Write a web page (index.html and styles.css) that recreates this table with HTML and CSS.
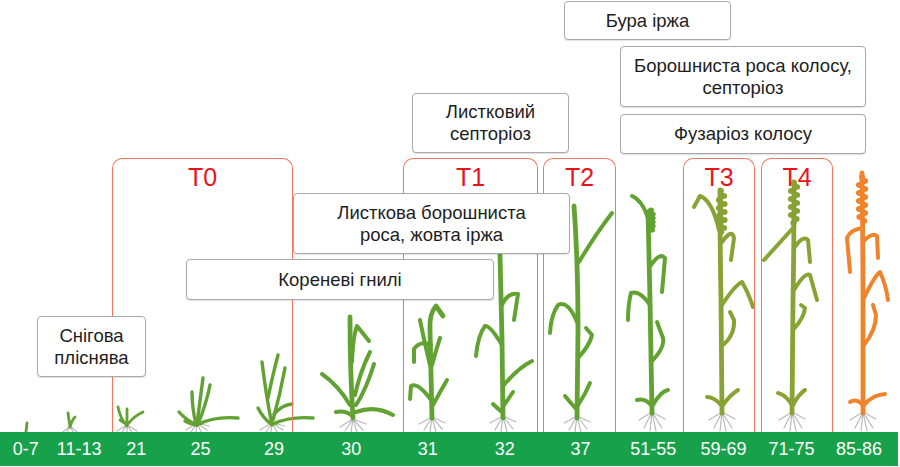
FILE: index.html
```html
<!DOCTYPE html>
<html lang="uk">
<head>
<meta charset="utf-8">
<title>Фази розвитку пшениці</title>
<link rel="stylesheet" href="styles.css">
</head>
<body>
<div class="chart">
  <div class="stage">
    <svg class="plants" width="900" height="432" viewBox="0 0 900 432" xmlns="http://www.w3.org/2000/svg">
      <g class="roots">
        <path d="M70 426 L63 432 M70 426 L67 432 M70 426 L73 432 M70 426 L77 432"/>
        <path d="M127 425 L117 431 M127 425 L122 432 M127 425 L127 432 M127 425 L132 432 M127 425 L137 431"/>
        <path d="M197 423 L186 430 M197 423 L191 432 M197 423 L196 432 M197 423 L201 432 M197 423 L207 430 M197 423 L209 426"/>
        <path d="M272 423 L260 430 M272 423 L266 432 M272 423 L271 432 M272 423 L277 432 M272 423 L283 430 M272 423 L285 426"/>
        <path d="M353 419 L340 427 M353 419 L345 431 M353 419 L351 432 M353 419 L357 432 M353 419 L363 430 M353 419 L366 424"/>
        <path d="M432 417 L419 424 M432 417 L424 430 M432 417 L430 432 M432 417 L436 432 M432 417 L442 429 M432 417 L445 423"/>
        <path d="M503 416 L490 423 M503 416 L495 430 M503 416 L501 432 M503 416 L507 432 M503 416 L513 429 M503 416 L516 422"/>
        <path d="M577 416 L564 423 M577 416 L569 430 M577 416 L575 432 M577 416 L581 432 M577 416 L587 429 M577 416 L590 422"/>
        <path d="M652 412 L639 420 M652 412 L644 428 M652 412 L650 431 M652 412 L656 431 M652 412 L662 428 M652 412 L665 419"/>
        <path d="M722 412 L709 420 M722 412 L714 428 M722 412 L720 431 M722 412 L726 431 M722 412 L732 428 M722 412 L735 419"/>
        <path d="M792 412 L779 420 M792 412 L784 428 M792 412 L790 431 M792 412 L796 431 M792 412 L802 428 M792 412 L805 419"/>
        <path d="M863 412 L850 420 M863 412 L855 428 M863 412 L861 431 M863 412 L867 431 M863 412 L873 428 M863 412 L876 419"/>
      </g>

      <g class="plant green thin">
        <path d="M26 432 L27 423"/>
        <path d="M70 427 L68 413 M70 427 Q72 420 75 417"/>
        <path d="M127 426 Q120 418 118 407 M127 426 L127 409 M128 424 Q134 416 143 412 M126 424 L120 420"/>
      </g>

      <g class="plant green mid">
        <path d="M197 425 Q186 420 179 412"/>
        <path d="M197 425 Q200 400 203 378"/>
        <path d="M198 424 Q206 405 210 385"/>
        <path d="M196 424 Q192 408 192 392"/>
        <path d="M199 424 Q215 416 238 418"/>
        <path d="M196 425 Q190 424 185 421"/>
      </g>

      <g class="plant green mid">
        <path d="M272 425 Q266 395 262 362"/>
        <path d="M268 398 Q272 378 278 355"/>
        <path d="M273 420 Q280 395 285 368"/>
        <path d="M271 424 Q263 418 258 408"/>
        <path d="M273 424 Q290 416 313 418"/>
        <path d="M274 414 Q282 405 292 404"/>
      </g>

      <g class="plant green">
        <path class="stem" d="M353 418 Q350 370 350 317"/>
        <path d="M352 362 Q353 336 357 326 L369 341"/>
        <path d="M355 395 Q360 372 370 352"/>
        <path d="M350 405 Q338 385 322 374"/>
        <path d="M356 412 Q375 405 393 415"/>
        <path d="M351 415 Q345 410 336 412"/>
        <path d="M356 405 Q366 390 374 364"/>
      </g>

      <g class="plant green">
        <path class="stem" d="M432 418 L430 330 Q429 314 436 306 L443 316"/>
        <path d="M430 365 Q424 340 420 320"/>
        <path d="M431 345 Q420 340 414 349 L414 362"/>
        <path d="M432 365 Q436 350 440 338"/>
        <path d="M431 400 Q418 382 411 386 L410 399"/>
        <path d="M433 405 Q440 392 447 380"/>
      </g>

      <g class="plant green">
        <path class="stem" d="M503 418 L502 340 Q501 290 500 255"/>
        <path d="M502 305 Q508 292 518 294 L514 320"/>
        <path d="M502 345 Q490 325 485 326 Q478 335 476 356"/>
        <path d="M504 385 Q518 368 532 361"/>
        <path d="M504 405 Q509 398 513 392"/>
        <path d="M502 412 Q497 408 493 404"/>
      </g>

      <g class="plant green">
        <path class="stem" d="M577 418 L578 330 Q578 260 574 206"/>
        <path d="M579 262 Q595 235 612 213"/>
        <path d="M577 322 Q568 300 558 305 Q551 315 550 333"/>
        <path d="M578 358 Q590 345 592 335 L586 328"/>
        <path d="M578 405 Q585 395 590 383"/>
        <path d="M577 410 Q570 402 565 396"/>
      </g>

      <g class="plant green">
        <path class="stem" d="M652 413 L650 300 Q649 250 648 212"/>
        <g class="ear">
          <ellipse cx="651" cy="210" rx="3" ry="2.6"/>
          <ellipse cx="652.5" cy="214" rx="3.2" ry="2.6"/>
          <ellipse cx="652.5" cy="218" rx="3.2" ry="2.6"/>
          <ellipse cx="652.5" cy="222" rx="3.2" ry="2.6"/>
          <ellipse cx="652.5" cy="226" rx="3.2" ry="2.6"/>
          <ellipse cx="652" cy="230" rx="3" ry="2.6"/>
        </g>
        <path d="M648 218 Q642 200 632 196"/>
        <path d="M651 265 Q660 252 665 258 L662 292"/>
        <path d="M650 305 Q640 290 631 293 Q628 305 628 320"/>
        <path d="M651 362 Q665 348 663 338 L657 322"/>
        <path d="M651 405 Q645 398 637 400"/>
        <path d="M653 405 Q660 392 668 390"/>
      </g>

      <g class="plant olive">
        <path class="stem" d="M722 413 L721 300 Q720 250 720 190"/>
        <g class="ear">
          <ellipse cx="721" cy="191" rx="3" ry="3"/>
          <ellipse cx="723.5" cy="196" rx="3.6" ry="3"/>
          <ellipse cx="719.5" cy="200" rx="3.6" ry="3"/>
          <ellipse cx="724" cy="204" rx="3.6" ry="3"/>
          <ellipse cx="719.5" cy="208" rx="3.6" ry="3"/>
          <ellipse cx="724" cy="212" rx="3.6" ry="3"/>
          <ellipse cx="719.5" cy="216" rx="3.6" ry="3"/>
          <ellipse cx="724" cy="220" rx="3.6" ry="3"/>
          <ellipse cx="720" cy="224" rx="3.6" ry="3"/>
          <ellipse cx="723.5" cy="228" rx="3.6" ry="3"/>
          <ellipse cx="721" cy="232" rx="3.2" ry="3"/>
        </g>
        <path d="M719 230 Q712 200 700 196 L694 207"/>
        <path d="M722 242 Q732 228 734 238 L731 260"/>
        <path d="M722 305 Q735 285 742 282 Q748 292 753 307"/>
        <path d="M723 345 Q735 335 734 320 L730 312"/>
        <path d="M721 405 Q714 397 707 397"/>
        <path d="M723 405 Q730 395 738 390"/>
      </g>

      <g class="plant olive">
        <path class="stem" d="M792 413 L793 300 Q794 250 794 182"/>
        <g class="ear">
          <ellipse cx="794" cy="183" rx="3" ry="3"/>
          <ellipse cx="796.5" cy="187" rx="3.6" ry="3"/>
          <ellipse cx="791.5" cy="191" rx="3.6" ry="3"/>
          <ellipse cx="796.5" cy="195" rx="3.6" ry="3"/>
          <ellipse cx="791.5" cy="199" rx="3.6" ry="3"/>
          <ellipse cx="796.5" cy="203" rx="3.6" ry="3"/>
          <ellipse cx="791.5" cy="207" rx="3.6" ry="3"/>
          <ellipse cx="796.5" cy="211" rx="3.6" ry="3"/>
          <ellipse cx="791.5" cy="215" rx="3.6" ry="3"/>
          <ellipse cx="796" cy="219" rx="3.6" ry="3"/>
          <ellipse cx="793.5" cy="223" rx="3.2" ry="3"/>
        </g>
        <path d="M793 228 L764 260"/>
        <path d="M795 247 Q803 235 808 240 L810 262"/>
        <path d="M794 290 Q805 272 810 275 L817 300"/>
        <path d="M793 330 Q804 318 805 308 L801 305"/>
        <path d="M792 405 Q786 395 778 393"/>
        <path d="M793 405 Q798 395 805 390"/>
      </g>

      <g class="plant orange">
        <path class="stem" d="M863 413 L863 300 Q863 250 862 173"/>
        <g class="ear">
          <ellipse cx="862" cy="177" rx="3" ry="3"/>
          <ellipse cx="864.5" cy="181" rx="3.6" ry="3"/>
          <ellipse cx="859.5" cy="185" rx="3.6" ry="3"/>
          <ellipse cx="864.5" cy="189" rx="3.6" ry="3"/>
          <ellipse cx="859.5" cy="193" rx="3.6" ry="3"/>
          <ellipse cx="864.5" cy="197" rx="3.6" ry="3"/>
          <ellipse cx="859.5" cy="201" rx="3.6" ry="3"/>
          <ellipse cx="864.5" cy="205" rx="3.6" ry="3"/>
          <ellipse cx="859.5" cy="209" rx="3.6" ry="3"/>
          <ellipse cx="864.5" cy="213" rx="3.6" ry="3"/>
          <ellipse cx="860" cy="217" rx="3.6" ry="3"/>
          <ellipse cx="864" cy="221" rx="3.2" ry="3"/>
        </g>
        <path d="M862 228 Q850 230 847 238 L850 272"/>
        <path d="M863 242 Q872 232 877 236 L878 258"/>
        <path d="M863 300 Q875 275 880 272 Q886 285 888 300"/>
        <path d="M864 345 Q876 330 876 315 L873 305"/>
        <path d="M863 405 Q856 398 850 402"/>
        <path d="M864 405 Q872 395 885 394"/>
      </g>
    </svg>

    <div class="tbox t0">T0</div>
    <div class="tbox t1">T1</div>
    <div class="tbox t2">T2</div>
    <div class="tbox t3">T3</div>
    <div class="tbox t4">T4</div>

    <div class="note snow">Снігова<br>пліснява</div>
    <div class="note rootrot">Кореневі гнилі</div>
    <div class="note mildew">Листкова борошниста<br>роса, жовта іржа</div>
    <div class="note septoria">Листковий<br>септоріоз</div>
    <div class="note brownrust">Бура іржа</div>
    <div class="note earmildew">Борошниста роса колосу,<br>септоріоз</div>
    <div class="note fusarium">Фузаріоз колосу</div>
  </div>

  <div class="scale">
    <span>0-7</span>
    <span>11-13</span>
    <span>21</span>
    <span>25</span>
    <span>29</span>
    <span>30</span>
    <span>31</span>
    <span>32</span>
    <span>37</span>
    <span>51-55</span>
    <span>59-69</span>
    <span>71-75</span>
    <span>85-86</span>
  </div>
</div>
</body>
</html>
```

FILE: styles.css
```css
* { box-sizing: border-box; }

html, body {
  margin: 0;
  padding: 0;
  background: #ffffff;
}

body {
  font-family: "Liberation Sans", Arial, sans-serif;
}

.chart {
  width: 900px;
  height: 467px;
  overflow: hidden;
}

.stage {
  position: relative;
  width: 900px;
  height: 432px;
}

.plants {
  display: block;
}

.roots path {
  fill: none;
  stroke: #b9b9b9;
  stroke-width: 1.2;
  stroke-linecap: round;
}

.plant path {
  fill: none;
  stroke-width: 4;
  stroke-linecap: round;
  stroke-linejoin: round;
}

.plant .stem { stroke-width: 4.8; }
.plant.mid path { stroke-width: 3.4; }
.plant.thin path { stroke-width: 2.8; }

.green path { stroke: #62a232; }
.green .ear { fill: #62a232; }
.olive path { stroke: #88a334; }
.olive .ear { fill: #88a334; }
.orange path { stroke: #f0842c; }
.orange .ear { fill: #f0842c; }

.tbox {
  position: absolute;
  top: 158px;
  bottom: 0;
  border: 1px solid #f2775a;
  border-bottom: none;
  border-radius: 10px 10px 0 0;
  padding-top: 6px;
  color: #e8141b;
  font-size: 25px;
  line-height: 25px;
  text-align: center;
}

.t0 { left: 112px; width: 181px; }
.t1 { left: 403px; width: 135px; }
.t2 { left: 543px; width: 73px; }
.t3 { left: 683px; width: 72px; }
.t4 { left: 761px; width: 72px; }

.note {
  position: absolute;
  display: flex;
  align-items: center;
  justify-content: center;
  text-align: center;
  background: #ffffff;
  border: 1px solid #a9a9a9;
  border-radius: 4px;
  box-shadow: 0 1px 1px rgba(0, 0, 0, 0.12);
  color: #1e1e1e;
  font-size: 18.5px;
  line-height: 22px;
}

.snow      { left: 37px;  top: 316px; width: 109px; height: 61px; }
.rootrot   { left: 186px; top: 259px; width: 308px; height: 41px; }
.mildew    { left: 293px; top: 193px; width: 277px; height: 61px; }
.septoria  { left: 412px; top: 93px;  width: 157px; height: 60px; }
.brownrust { left: 564px; top: 1px;   width: 167px; height: 39px; }
.earmildew { left: 620px; top: 46px;  width: 246px; height: 61px; }
.fusarium  { left: 620px; top: 114px; width: 246px; height: 40px; }

.scale {
  display: grid;
  grid-template-columns: 51.75px 54.75px 59.5px 69px 78px 76.5px 76.5px 77.5px 74px 71.5px 69px 67px 73px;
  align-items: center;
  width: 898px;
  height: 34px;
  background: #17a14a;
  color: #ffffff;
  font-size: 18px;
  line-height: 20px;
}

.scale span {
  display: flex;
  justify-content: center;
  white-space: nowrap;
}

.scale span:last-child {
  padding-right: 5px;
}
```
